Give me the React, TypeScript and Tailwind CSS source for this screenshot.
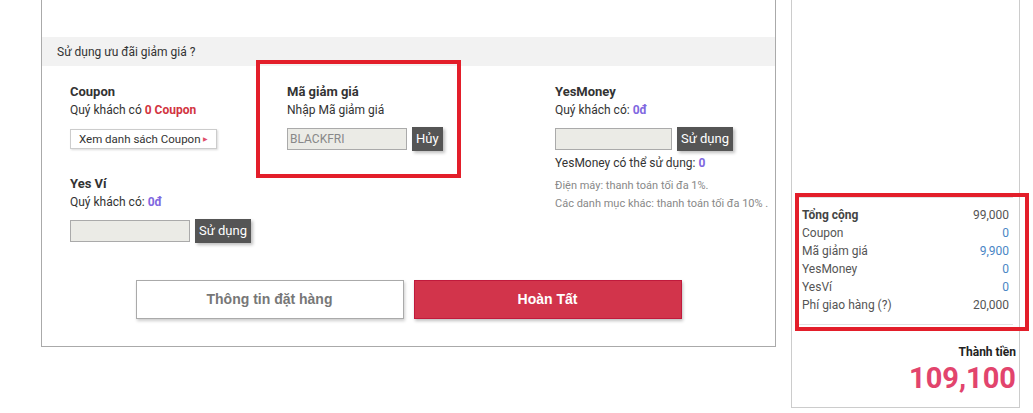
import React from "react";

function DarkButton({ children }: { children: React.ReactNode }) {
  return (
    <button className="h-[24px] px-[4px] bg-[#555] text-white text-[13px] leading-[24px] shadow-[2px_2px_3px_rgba(0,0,0,0.25)]">
      {children}
    </button>
  );
}

function Field({ value, width }: { value?: string; width: string }) {
  return (
    <div
      className={`${width} h-[22px] bg-[#ebebe6] border border-[#aaa] text-[12px] leading-[20px] text-[#888] pl-[2px]`}
    >
      {value}
    </div>
  );
}

const rows = [
  { label: "Tổng cộng", value: "99,000", bold: true, blue: false },
  { label: "Coupon", value: "0", bold: false, blue: true },
  { label: "Mã giảm giá", value: "9,900", bold: false, blue: true },
  { label: "YesMoney", value: "0", bold: false, blue: true },
  { label: "YesVí", value: "0", bold: false, blue: true },
  { label: "Phí giao hàng (?)", value: "20,000", bold: false, blue: false },
];

export default function App() {
  return (
    <div className="relative flex w-[1033px] h-[413px] bg-white overflow-hidden font-['Roboto',sans-serif] text-[#333]">
      {/* left panel */}
      <div className="ml-[41px] w-[735px] h-[347px] border-x border-b border-[#aaa] flex flex-col">
        <div className="h-[37px]" />
        <div className="h-[29px] bg-[#f2f2f2] pl-[15px] flex items-center text-[12px] text-[#333]">
          Sử dụng ưu đãi giảm giá ?
        </div>
        <div className="flex pl-[28px] pt-[17px] text-[12px] leading-[18px]">
          <div className="w-[217px] flex flex-col">
            <div className="font-bold text-[13px]">Coupon</div>
            <div>
              Quý khách có <span className="font-bold text-[#d2343f]">0 Coupon</span>
            </div>
            <button className="mt-[10px] w-[147px] h-[20px] border border-[#ccc] shadow-[1px_1px_2px_rgba(0,0,0,0.15)] text-[11.5px] leading-[18px] text-[#333] text-left pl-[8px] flex items-center">
              Xem danh sách Coupon
              <span className="ml-[2px] text-[#e0506a] text-[6px]">▶</span>
            </button>
            <div className="mt-[26px] font-bold text-[13px]">Yes Ví</div>
            <div>
              Quý khách có: <span className="font-bold text-[#8067e0]">0đ</span>
            </div>
            <div className="mt-[8px] flex items-center gap-[5px]">
              <Field width="w-[120px]" />
              <DarkButton>Sử dụng</DarkButton>
            </div>
          </div>
          <div className="w-[268px] flex flex-col">
            <div className="font-bold text-[13px]">Mã giảm giá</div>
            <div>Nhập Mã giảm giá</div>
            <div className="mt-[8px] flex items-center gap-[5px]">
              <Field width="w-[120px]" value="BLACKFRI" />
              <DarkButton>Hủy</DarkButton>
            </div>
          </div>
          <div className="flex flex-col">
            <div className="font-bold text-[13px]">YesMoney</div>
            <div>
              Quý khách có: <span className="font-bold text-[#8067e0]">0đ</span>
            </div>
            <div className="mt-[8px] flex items-center gap-[5px]">
              <Field width="w-[117px]" />
              <DarkButton>Sử dụng</DarkButton>
            </div>
            <div className="mt-[3px]">
              YesMoney có thể sử dụng: <span className="font-bold text-[#8067e0]">0</span>
            </div>
            <div className="mt-[5px] text-[11px] text-[#888]">Điện máy: thanh toán tối đa 1%.</div>
            <div className="text-[11px] text-[#888]">Các danh mục khác: thanh toán tối đa 10% .</div>
          </div>
        </div>
        <div className="mt-[37px] flex justify-center gap-[10px] font-['Liberation_Sans',Arial,sans-serif] font-bold text-[14px]">
          <button className="w-[268px] h-[39px] border border-[#aaa] text-[#777] shadow-[1px_2px_3px_rgba(0,0,0,0.2)]">
            Thông tin đặt hàng
          </button>
          <button className="w-[268px] h-[39px] bg-[#d2344b] border border-[#c01a3c] text-white shadow-[1px_2px_3px_rgba(0,0,0,0.25)]">
            Hoàn Tất
          </button>
        </div>
      </div>

      {/* right column */}
      <div className="ml-[15px] w-[229px] h-[408px] border-x border-b border-[#ccc] flex flex-col">
        <div className="h-[197px]" />
        <div className="mx-[6px] border-y border-[#e2e2e2] pt-[8px] pb-[10px] px-[4px] text-[12px] leading-[18px]">
          {rows.map((r) => (
            <div key={r.label} className="flex justify-between">
              <span className={r.bold ? "font-bold text-[#444]" : "text-[#555]"}>{r.label}</span>
              <span className={r.blue ? "text-[#4a86c5]" : "text-[#555]"}>{r.value}</span>
            </div>
          ))}
        </div>
        <div className="mt-[19px] pr-[3px] text-right">
          <div className="text-[12px] font-bold leading-[16px] text-[#222]">Thành tiền</div>
          <div className="text-[29px] font-bold leading-[32px] text-[#e2446d] mt-[2px]">109,100</div>
        </div>
      </div>

      {/* annotation frames */}
      <div className="absolute left-[256px] top-[60px] w-[205px] h-[118px] border-[4px] border-[#e31e2a]" />
      <div className="absolute left-[795px] top-[193px] w-[234px] h-[138px] border-[4px] border-[#e31e2a]" />
    </div>
  );
}
